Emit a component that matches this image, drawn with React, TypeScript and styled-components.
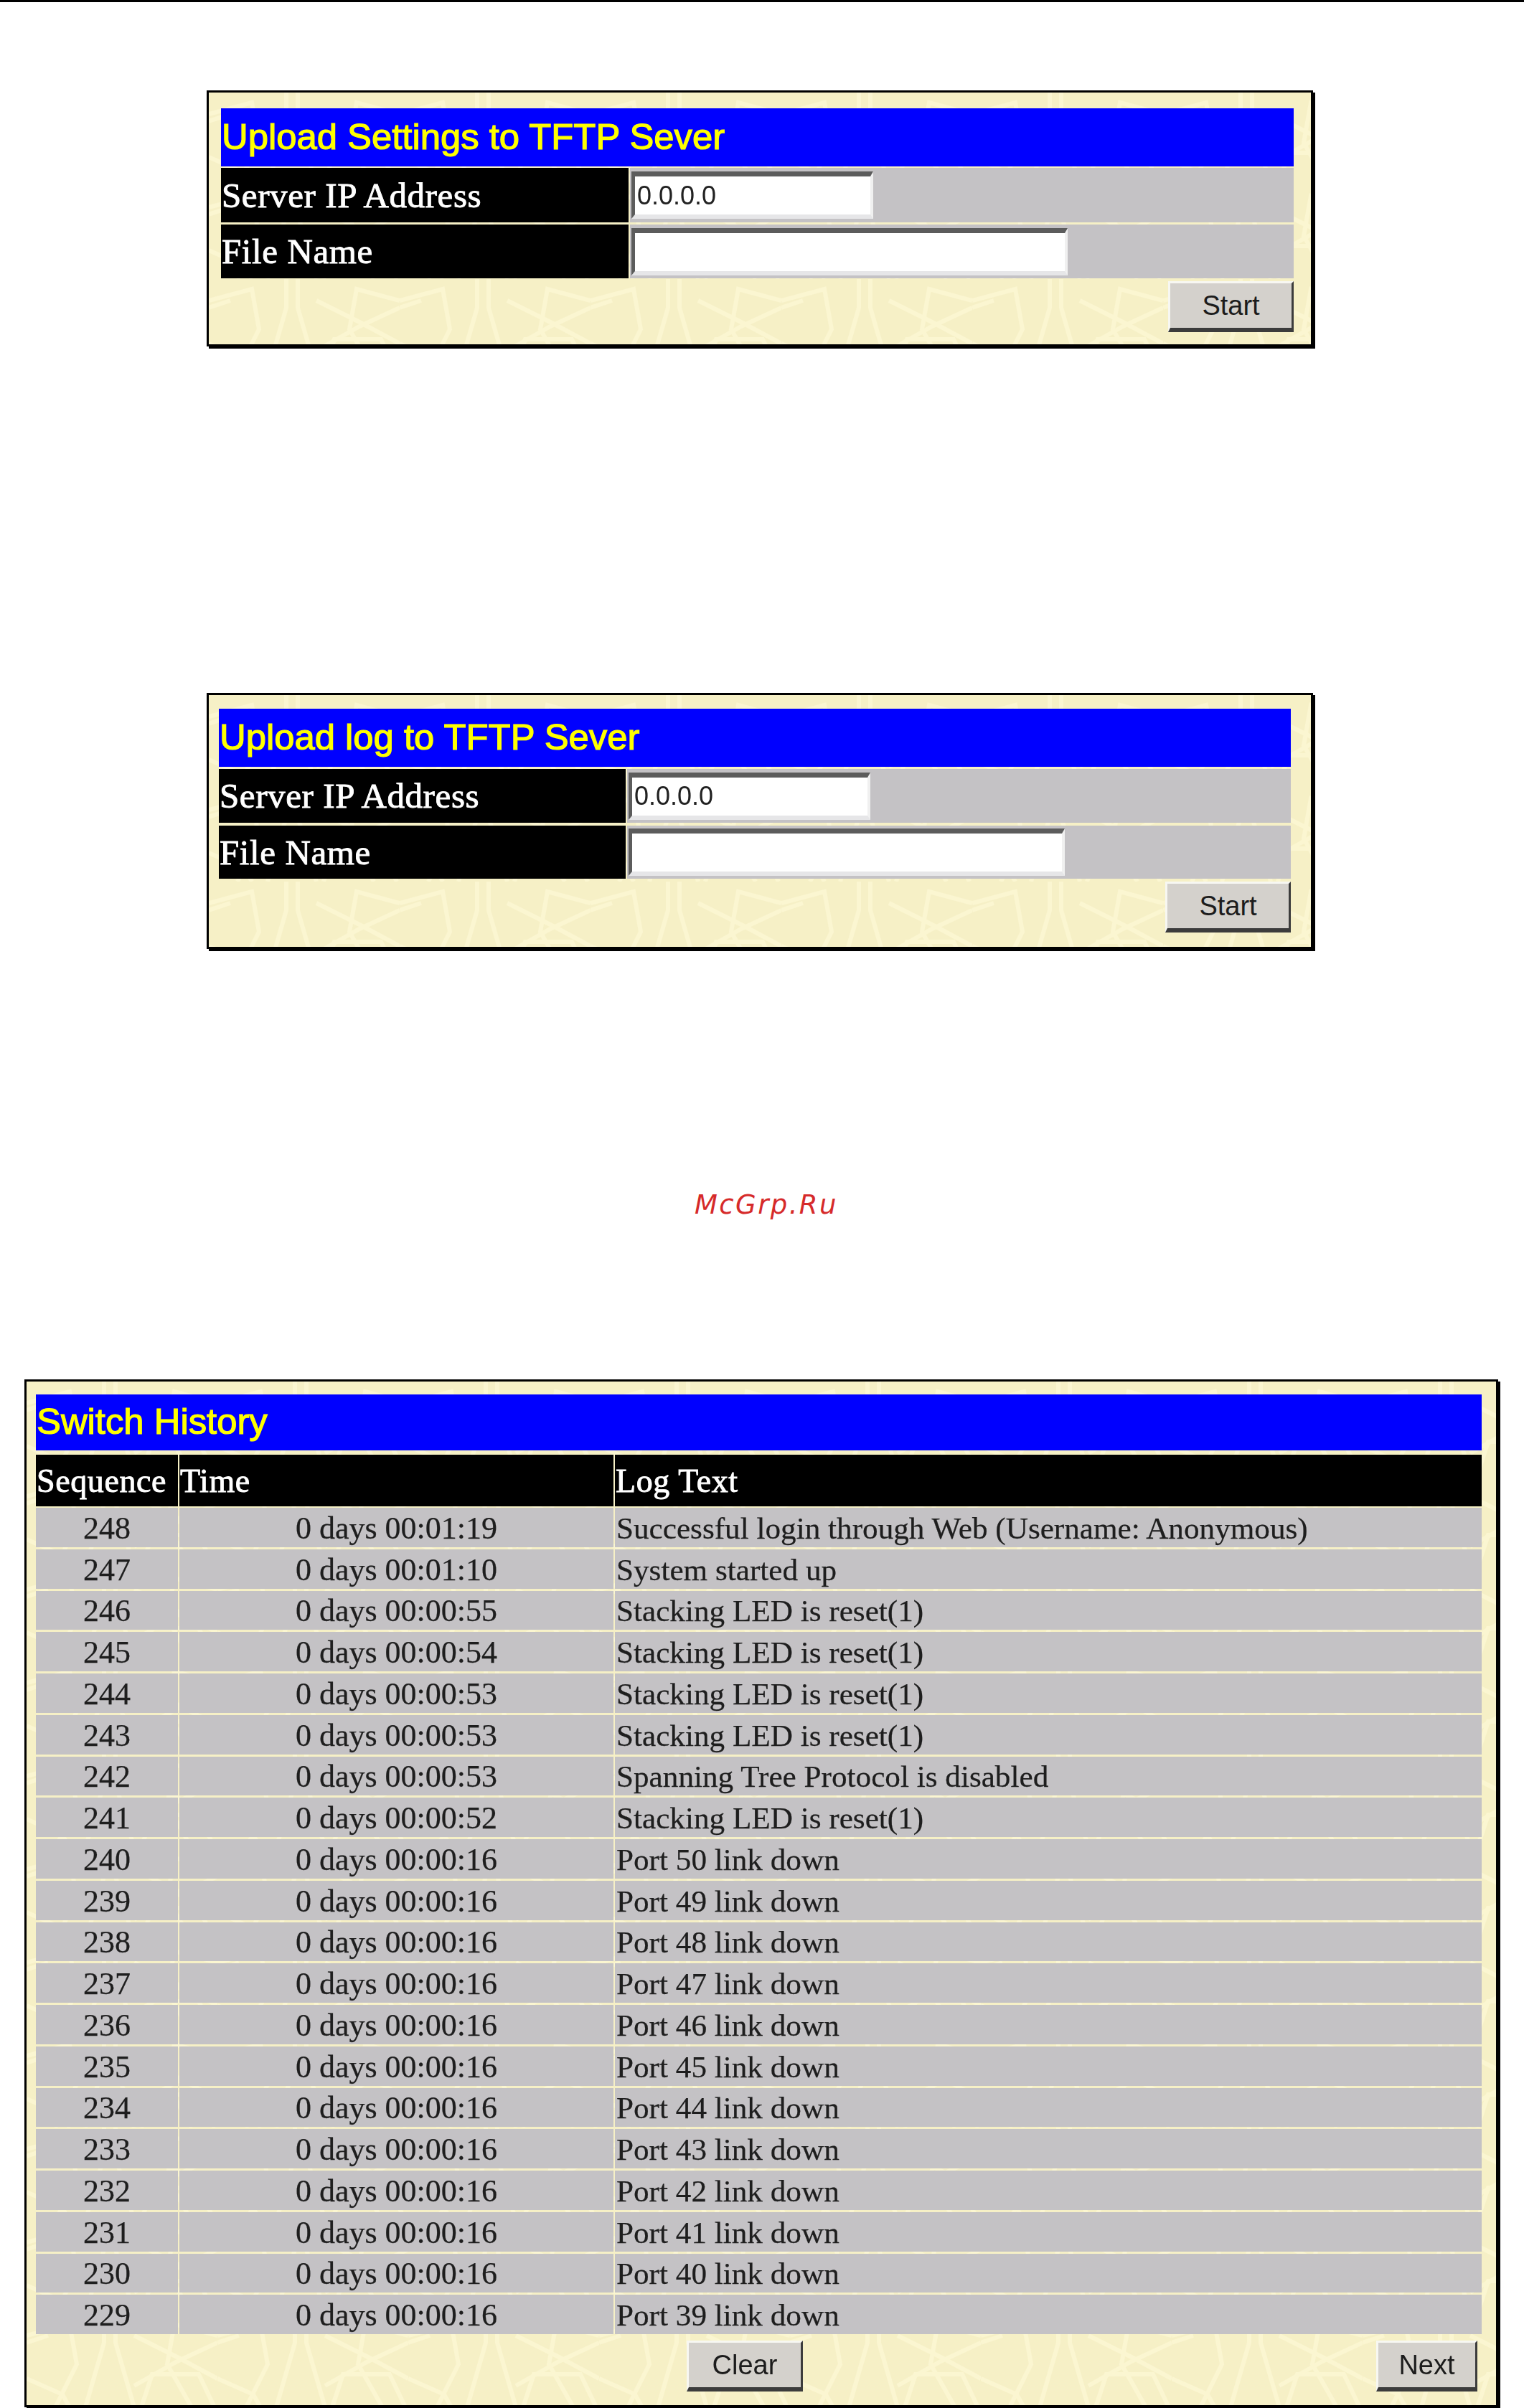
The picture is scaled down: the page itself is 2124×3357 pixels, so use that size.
import { Fragment } from "react";
import styled, { createGlobalStyle } from "styled-components";

const tile = encodeURIComponent(
  `<svg xmlns="http://www.w3.org/2000/svg" width="266" height="130"><g fill="none" stroke="#fbf6d1" stroke-width="6"><path d="M108 0 L108 40 L82 130 M124 0 L124 40 L150 130"/><path d="M0 30 L60 14 L70 70 L40 130 M230 130 L196 70 L206 14 L266 30"/><path d="M150 30 L210 60 L266 90 M150 100 L210 66 L266 40"/><path d="M0 90 L50 112 L60 130 M0 40 L30 30"/><path d="M160 130 L175 84 L240 84 L262 130"/></g></svg>`
);

const GlobalStyle = createGlobalStyle`
  html, body {
    margin: 0;
    padding: 0;
    background: #ffffff;
  }
`;

const Page = styled.div`
  width: 2124px;
  height: 3357px;
  overflow: hidden;
  background: #ffffff;
`;

const TopRule = styled.div`
  height: 3px;
  background: #000000;
`;

const Panel = styled.section<{
  $top: number;
  $left: number;
  $width: number;
  $padding: string;
}>`
  box-sizing: border-box;
  width: ${(p) => p.$width}px;
  margin: ${(p) => p.$top}px 0 0 ${(p) => p.$left}px;
  padding: ${(p) => p.$padding};
  border: 3px solid #000000;
  box-shadow: 3px 3px 0 #000000;
  background: #f6f0c6 url("data:image/svg+xml,${tile}");
  filter: blur(0.7px);
`;

const TitleBar = styled.h2<{ $height: number }>`
  display: flex;
  align-items: center;
  height: ${(p) => p.$height}px;
  margin: 0;
  padding-left: 1px;
  padding-bottom: 3px;
  box-sizing: border-box;
  background: #0000ff;
  color: #ffff00;
  font-family: "Liberation Sans", Arial, sans-serif;
  font-size: 50.8px;
  font-weight: 400;
  -webkit-text-stroke: 1.2px #ffff00;
`;

const FormRow = styled.div<{ $height: number; $top: number; $label: number }>`
  display: grid;
  grid-template-columns: ${(p) => p.$label}px 1fr;
  column-gap: 2px;
  height: ${(p) => p.$height}px;
  margin-top: ${(p) => p.$top}px;
`;

const BlackCell = styled.div`
  display: flex;
  align-items: center;
  padding-left: 1px;
  background: #000000;
  color: #ffffff;
  font-family: "Liberation Serif", "Times New Roman", serif;
  font-size: 49px;
  letter-spacing: 0.6px;
  -webkit-text-stroke: 0.9px #ffffff;
  white-space: pre;
`;

const ValueCell = styled.div`
  display: flex;
  align-items: center;
  padding-left: 2px;
  background: #c4c2c5;
`;

const TextBox = styled.input<{ $width: number }>`
  box-sizing: border-box;
  width: ${(p) => p.$width}px;
  height: 66px;
  padding: 0 0 0 3px;
  border-style: solid;
  border-width: 7px 4px 6px 5px;
  border-color: #5c5c5c #f0f0f0 #e6e6e8 #5c5c5c;
  background: #ffffff;
  color: #222222;
  font-family: "Liberation Sans", Arial, sans-serif;
  font-size: 36px;
  outline: none;
`;

const ActionRow = styled.div<{ $top: number }>`
  display: flex;
  justify-content: flex-end;
  margin-top: ${(p) => p.$top}px;
`;

const PushButton = styled.button<{ $width: number }>`
  box-sizing: border-box;
  width: ${(p) => p.$width}px;
  height: 71px;
  padding: 0;
  border-style: solid;
  border-width: 3px 3px 6px 3px;
  border-color: #f7f7f2 #3c3c3c #3c3c3c #f7f7f2;
  background: #d4d1cc;
  color: #1c1c1c;
  font-family: "Liberation Sans", Arial, sans-serif;
  font-size: 38px;
`;

const Watermark = styled.div`
  margin: 335px 0 0 968px;
  height: 44px;
  line-height: 44px;
  color: #d62a2a;
  font-family: "DejaVu Sans", sans-serif;
  font-size: 37px;
  font-style: italic;
  letter-spacing: 2.4px;
`;

const Table = styled.div`
  display: grid;
  grid-template-columns: 198px 605px 1fr;
  column-gap: 2px;
  row-gap: 3px;
  grid-auto-rows: 54.75px;
  margin-top: 2px;
`;

const HeaderRow = styled.div`
  display: grid;
  grid-template-columns: 198px 605px 1fr;
  column-gap: 2px;
  height: 72px;
  margin-top: 6px;
`;

const HeaderCell = styled(BlackCell)`
  font-size: 46px;
  letter-spacing: 0.6px;
`;

const DataCell = styled.div<{ $center?: boolean; $size: number }>`
  display: flex;
  align-items: center;
  justify-content: ${(p) => (p.$center ? "center" : "flex-start")};
  padding-top: 2px;
  padding-left: ${(p) => (p.$center ? 0 : 2)}px;
  box-sizing: border-box;
  background: #c4c2c5;
  color: #1e1e1e;
  font-family: "Liberation Serif", "Times New Roman", serif;
  font-size: ${(p) => p.$size}px;
  -webkit-text-stroke: 0.25px #1e1e1e;
  white-space: pre;
`;

const TableFooter = styled.div`
  display: grid;
  grid-template-columns: 907px 162px 1fr;
  margin-top: 9px;
  padding-right: 6px;
`;

const FooterNext = styled.div`
  display: flex;
  justify-content: flex-end;
  grid-column: 3;
`;

const FooterClear = styled.div`
  grid-column: 2;
`;

const stacking = "Stacking LED is reset(1)";

const topEntries: [number, string, string][] = [
  [248, "0 days 00:01:19", "Successful login through Web (Username: Anonymous)"],
  [247, "0 days 00:01:10", "System started up"],
  [246, "0 days 00:00:55", stacking],
  [245, "0 days 00:00:54", stacking],
  [244, "0 days 00:00:53", stacking],
  [243, "0 days 00:00:53", stacking],
  [242, "0 days 00:00:53", "Spanning Tree Protocol is disabled"],
  [241, "0 days 00:00:52", stacking],
];

// the remaining rows all go down one port per sequence number
const portEntries: [number, string, string][] = Array.from({ length: 12 }, (_, i) => [
  240 - i,
  "0 days 00:00:16",
  `Port ${50 - i} link down`,
]);

const entries = [...topEntries, ...portEntries];

interface UploadPanelProps {
  title: string;
  top: number;
  padding: string;
  labelWidth: number;
  rowTop: number;
  heights: [number, number, number];
  gap: number;
  buttonTop: number;
}

const UploadPanel = ({
  title,
  top,
  padding,
  labelWidth,
  rowTop,
  heights,
  gap,
  buttonTop,
}: UploadPanelProps) => (
  <Panel $top={top} $left={288} $width={1542} $padding={padding}>
    <TitleBar $height={heights[0]}>{title}</TitleBar>
    <FormRow $height={heights[1]} $top={rowTop} $label={labelWidth}>
      <BlackCell>Server IP Address</BlackCell>
      <ValueCell>
        <TextBox $width={337} defaultValue="0.0.0.0" readOnly />
      </ValueCell>
    </FormRow>
    <FormRow $height={heights[2]} $top={gap} $label={labelWidth}>
      <BlackCell>File Name</BlackCell>
      <ValueCell>
        <TextBox $width={608} readOnly />
      </ValueCell>
    </FormRow>
    <ActionRow $top={buttonTop}>
      <PushButton $width={175}>Start</PushButton>
    </ActionRow>
  </Panel>
);

const App = () => (
  <Page>
    <GlobalStyle />
    <TopRule />
    <UploadPanel
      title="Upload Settings to TFTP Sever"
      top={123}
      padding="22px 24px 17px 17px"
      labelWidth={568}
      rowTop={2}
      heights={[81, 76, 75]}
      gap={3}
      buttonTop={4}
    />
    <UploadPanel
      title="Upload log to TFTP Sever"
      top={483}
      padding="19px 28px 20px 14px"
      labelWidth={567}
      rowTop={3}
      heights={[81, 75, 74]}
      gap={4}
      buttonTop={4}
    />
    <Watermark>McGrp.Ru</Watermark>
    <Panel $top={221} $left={34} $width={2054} $padding="18px 20px 19px 13px">
      <TitleBar $height={78}>Switch History</TitleBar>
      <HeaderRow>
        <HeaderCell>Sequence</HeaderCell>
        <HeaderCell>Time</HeaderCell>
        <HeaderCell>Log Text</HeaderCell>
      </HeaderRow>
      <Table>
        {entries.map(([seq, time, text]) => (
          <Fragment key={seq}>
            <DataCell $center $size={44}>{seq}</DataCell>
            <DataCell $center $size={44}>{time}</DataCell>
            <DataCell $size={43.2}>{text}</DataCell>
          </Fragment>
        ))}
      </Table>
      <TableFooter>
        <FooterClear>
          <PushButton $width={162}>Clear</PushButton>
        </FooterClear>
        <FooterNext>
          <PushButton $width={141}>Next</PushButton>
        </FooterNext>
      </TableFooter>
    </Panel>
  </Page>
);

export default App;
